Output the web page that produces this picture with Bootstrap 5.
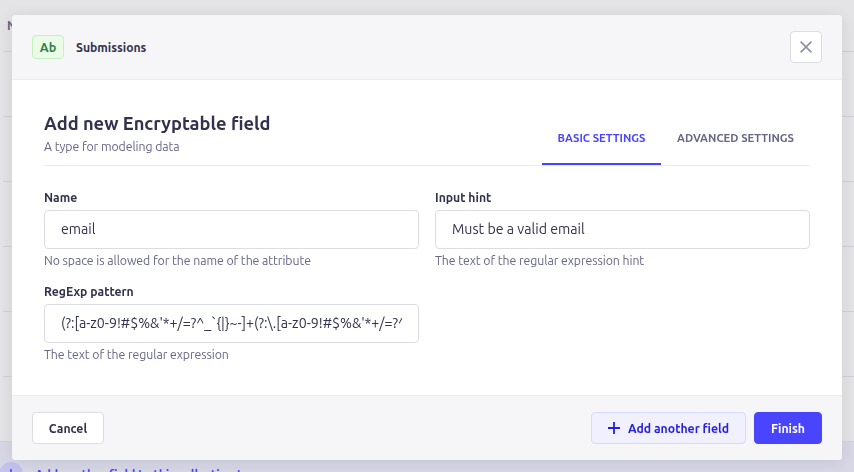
<!DOCTYPE html>
<html lang="en">
<head>
<meta charset="utf-8">
<meta name="viewport" content="width=device-width, initial-scale=1">
<title>Add new Encryptable field</title>
<link href="https://cdn.jsdelivr.net/npm/bootstrap@5.3.0/dist/css/bootstrap.min.css" rel="stylesheet">
<style>
body{font-family:Ubuntu,"Noto Sans",sans-serif;background:#e4e4e6;color:#32324d;height:472px;overflow:hidden;font-size:12px;line-height:16px}
.backdrop-page{height:472px;overflow:hidden}
.table-head{height:52px;padding:18px 0 0 4px;color:#666687;font-size:12px}
.line-row{height:65px}
.table-head,.line-row{margin-left:3px;border-bottom:1px solid #d0d0da}
.add-row{height:66px;margin-top:64px;background:#d8d7e6;border-top:1px solid #d0d0da;padding:20px 0 0;color:#4945ff}
.add-dot{width:24px;height:24px;margin-left:-1px;background:#c3c2ee}
.add-text{margin-left:12px;padding-top:5px;font-size:12.15px}
.dialog-layer{inset:0;padding:15px 12px 12px}
.panel{height:445px;border-radius:4px;box-shadow:0 2px 15px rgba(33,33,52,.1)}
.panel-top{height:65px;padding:16px 20px;background:#f6f6f9;border-bottom:1px solid #eaeaef}
.panel-main{padding:32px 32px 0}
.panel-bottom{height:65px;padding:16px 20px;background:#f6f6f9;border-top:1px solid #eaeaef}
.type-tag{width:32px;height:24px;background:#eafbe7;border:1px solid #c6f0c2;border-radius:4px;color:#328048;font-size:12.6px;line-height:22px}
.crumb{font-size:12.2px;margin-left:12px;padding-top:1px}
.close-btn{width:32px;height:32px;border:1px solid #dcdce4;border-radius:4px}
.heading-row{height:54px;border-bottom:1px solid #eaeaef}
.heading-row h1{font-size:18.3px;line-height:22px;margin:0 0 5px}
.muted{color:#666687;font-size:12.3px;line-height:16px;letter-spacing:-.07px}
.tab-item{height:53px;border:0;border-bottom:2px solid transparent;background:none;padding:1px 0 0;color:#666687;font-size:11.25px;line-height:14px}
.tab-item.active{border-color:#4945ff;color:#4945ff}
.tab-one{width:119px}.tab-two{width:149px}
.fields{margin-top:24px;--bs-gutter-x:16px;--bs-gutter-y:0}
.fields>div{height:94px}
.fields label{display:block;font-size:12.2px;line-height:16px;margin-bottom:4px}
.fields .form-control{height:39px;border-color:#dcdce4;border-radius:4px;padding:0 16px 1px;color:#32324d;font-size:14.2px;margin-bottom:4px}
.foot-btn{height:32px;border:1px solid #dcdce4;border-radius:4px;font-size:12.25px;font-weight:700;line-height:18px;padding:2px 0 0}
.cancel{width:72px;background:#fff;color:#32324d}
.another{width:155px;background:#f0f0ff;border-color:#d9d8ff;color:#271fe0}
.another svg{margin-top:-2px}
.finish{width:68px;background:#4945ff;border-color:#4945ff;color:#fff}
</style>
</head>
<body>
<div class="backdrop-page" aria-hidden="true">
  <div class="table-head fw-bold">NAME</div>
  <div class="line-row"></div><div class="line-row"></div><div class="line-row"></div><div class="line-row"></div><div class="line-row"></div>
  <div class="add-row d-flex">
    <span class="add-dot rounded-circle d-flex align-items-center justify-content-center"><svg width="10" height="10" viewBox="0 0 10 10" stroke="#4945ff" stroke-width="1.6"><path d="M5 0v10M0 5h10"/></svg></span>
    <span class="add-text fw-bold">Add another field to this collection type</span>
  </div>
</div>
<div class="dialog-layer position-fixed">
  <div class="panel bg-white d-flex flex-column overflow-hidden" role="dialog">
    <header class="panel-top d-flex align-items-center">
      <span class="type-tag text-center fw-bold">Ab</span>
      <span class="crumb fw-bold"><span>Submissions</span></span>
      <button class="close-btn bg-white ms-auto p-0 d-flex align-items-center justify-content-center" aria-label="Close"><svg width="12" height="12" viewBox="0 0 12 12" fill="none" stroke="#8e8ea9" stroke-width="1.6"><path d="M.6.6l10.8 10.8M11.4.6L.6 11.4"/></svg></button>
    </header>
    <main class="panel-main flex-grow-1">
      <div class="heading-row d-flex justify-content-between">
        <div>
          <h1 class="fw-bold"><span>Add new Encryptable field</span></h1>
          <div class="muted"><span>A type for modeling data</span></div>
        </div>
        <div class="d-flex" role="tablist">
          <button class="tab-item tab-one active fw-bold text-nowrap" role="tab"><span>BASIC SETTINGS</span></button>
          <button class="tab-item tab-two fw-bold text-nowrap" role="tab"><span>ADVANCED SETTINGS</span></button>
        </div>
      </div>
      <div class="row fields">
        <div class="col-6"><label class="fw-bold" for="n"><span>Name</span></label><input id="n" class="form-control" value="email"><div class="muted"><span>No space is allowed for the name of the attribute</span></div></div>
        <div class="col-6"><label class="fw-bold" for="h"><span>Input hint</span></label><input id="h" class="form-control" value="Must be a valid email"><div class="muted"><span>The text of the regular expression hint</span></div></div>
        <div class="col-6"><label class="fw-bold" for="r"><span>RegExp pattern</span></label><input id="r" class="form-control" value="(?:[a-z0-9!#$%&amp;'*+/=?^_`{|}~-]+(?:\.[a-z0-9!#$%&amp;'*+/=?^_`{|}~-]+)*"><div class="muted"><span>The text of the regular expression</span></div></div>
      </div>
    </main>
    <footer class="panel-bottom d-flex">
      <button class="btn foot-btn cancel"><span>Cancel</span></button>
      <button class="btn foot-btn another ms-auto me-2 d-flex align-items-center justify-content-center"><svg class="me-2" width="12" height="12" viewBox="0 0 12 12" stroke="#271fe0" stroke-width="1.8"><path d="M6 0v12M0 6h12"/></svg><span>Add another field</span></button>
      <button class="btn foot-btn finish"><span>Finish</span></button>
    </footer>
  </div>
</div>
<script src="https://cdn.jsdelivr.net/npm/bootstrap@5.3.0/dist/js/bootstrap.bundle.min.js"></script>
</body>
</html>
